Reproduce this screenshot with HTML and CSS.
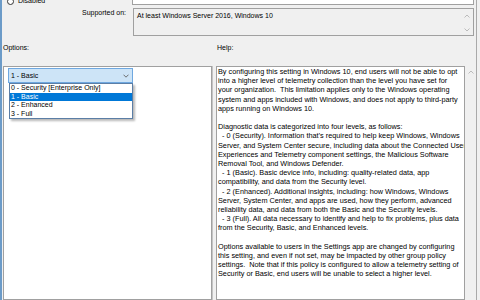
FILE: index.html
```html
<!DOCTYPE html>
<html>
<head>
<meta charset="utf-8">
<link rel="stylesheet" href="styles.css">
</head>
<body>
<div class="window">
  <div class="top">
    <div class="radio"><span class="radio-dot"></span><span class="radio-label">Disabled</span></div>
    <div class="comment-box"></div>
  </div>
  <div class="supported">
    <div class="sup-label">Supported on:</div>
    <div class="sup-box">
      <span class="sup-text">At least Windows Server 2016, Windows 10</span>
      <div class="sup-scroll">
        <svg class="arrow" width="6" height="4" viewBox="0 0 6 4"><path d="M0.5 3.5 L3 1 L5.5 3.5" fill="none" stroke="#b4b4b4" stroke-width="0.9"/></svg>
        <svg class="arrow" width="6" height="4" viewBox="0 0 6 4"><path d="M0.5 0.5 L3 3 L5.5 0.5" fill="none" stroke="#b4b4b4" stroke-width="0.9"/></svg>
      </div>
    </div>
  </div>
  <div class="labels">
    <div class="opt-label">Options:</div>
    <div class="help-label">Help:</div>
  </div>
  <div class="panes">
    <div class="options-pane">
      <div class="combo-wrap">
        <div class="combo">
          <span>1 - Basic</span>
          <svg class="chev" width="6" height="4" viewBox="0 0 6 4"><path d="M0.5 0.7 L3 3.2 L5.5 0.7" fill="none" stroke="#606060" stroke-width="0.9"/></svg>
        </div>
        <ul class="list">
          <li>0 - Security [Enterprise Only]</li>
          <li class="sel">1 - Basic</li>
          <li>2 - Enhanced</li>
          <li>3 - Full</li>
        </ul>
      </div>
    </div>
    <div class="help-pane">
      <div class="help-text">By configuring this setting in Windows 10, end users will not be able to opt
into a higher level of telemetry collection than the level you have set for
your organization.  This limitation applies only to the Windows operating
system and apps included with Windows, and does not apply to third-party
apps running on Windows 10.

Diagnostic data is categorized into four levels, as follows:
  - 0 (Security). Information that’s required to help keep Windows, Windows
Server, and System Center secure, including data about the Connected User
Experiences and Telemetry component settings, the Malicious Software
Removal Tool, and Windows Defender.
  - 1 (Basic). Basic device info, including: quality-related data, app
compatibility, and data from the Security level.
  - 2 (Enhanced). Additional insights, including: how Windows, Windows
Server, System Center, and apps are used, how they perform, advanced
reliability data, and data from both the Basic and the Security levels.
  - 3 (Full). All data necessary to identify and help to fix problems, plus data
from the Security, Basic, and Enhanced levels.

Options available to users in the Settings app are changed by configuring
this setting, and even if not set, may be impacted by other group policy
settings.  Note that if this policy is configured to allow a telemetry setting of
Security or Basic, end users will be unable to select a higher level.</div>
      <div class="help-scroll">
        <svg class="arrow" width="6" height="4" viewBox="0 0 6 4"><path d="M0.5 3.5 L3 1 L5.5 3.5" fill="none" stroke="#b4b4b4" stroke-width="0.9"/></svg>
      </div>
    </div>
  </div>
</div>
</body>
</html>
```
FILE: styles.css
```css
* { box-sizing: border-box; margin: 0; padding: 0; }
html, body { width: 480px; height: 300px; overflow: hidden; background: #f0f0f0; }
body {
  font-family: "Liberation Sans", Arial, sans-serif;
  font-size: 7px;
  color: #000;
}
.window {
  width: 477px;
  height: 300px;
  border-left: 2px solid #6c9bc8;
  border-right: 1px solid #a9a9a9;
  display: flex;
  flex-direction: column;
  overflow: hidden;
}
.top {
  display: flex;
  height: 5px;
  align-items: flex-start;
}
.radio {
  display: flex;
  align-items: center;
  margin-top: -3px;
  margin-left: 5px;
  height: 8px;
}
.radio-dot {
  width: 7px;
  height: 7px;
  border: 1px solid #333;
  border-radius: 50%;
  background: #fff;
  margin-right: 4px;
}
.radio-label { line-height: 8px; }
.comment-box {
  margin-left: auto;
  margin-right: 2px;
  width: 342px;
  height: 30px;
  margin-top: -25px;
  background: #fff;
  border: 1px solid #a0a0a0;
}
.supported {
  display: flex;
  margin-top: 3px;
}
.sup-label {
  width: 124px;
  text-align: right;
  padding-top: 1px;
  line-height: 8px;
}
.sup-box {
  margin-left: 7px;
  width: 341px;
  height: 28px;
  border: 1px solid #a0a0a0;
  display: flex;
  justify-content: space-between;
  padding-left: 3px;
  padding-top: 3px;
}
.sup-text { line-height: 8px; }
.sup-scroll {
  width: 12px;
  display: flex;
  flex-direction: column;
  align-items: center;
  gap: 10px;
  padding-top: 2px;
}
.arrow { display: block; }
.labels {
  display: flex;
  margin-top: 8px;
  line-height: 8px;
}
.opt-label { width: 214px; padding-left: 1px; }
.help-label { padding-left: 1px; }
.panes {
  display: flex;
  margin-top: 14px;
  flex: 1;
}
.options-pane {
  margin-left: 1px;
  width: 209px;
  background: #fff;
  border: 1px solid #a0a0a0;
  box-shadow: 1px 0 0 #c4c4c4;
}
.combo-wrap {
  position: relative;
  margin-left: 4px;
  margin-top: 1px;
  width: 125px;
}
.combo {
  height: 15px;
  background: #cde4f7;
  border: 1px solid #6fa8e0;
  display: flex;
  align-items: center;
  justify-content: space-between;
  padding-left: 2px;
  padding-right: 3px;
}
.list {
  position: absolute;
  top: 15px;
  left: 1px;
  width: 124px;
  list-style: none;
  background: #fff;
  border: 1px solid #5b7ea6;
  box-shadow: 2px 2px 2px rgba(0, 0, 0, 0.28);
}
.list li {
  height: 8.6px;
  line-height: 8.6px;
  padding-left: 1px;
}
.list li.sel { background: #0078d7; color: #fff; }
.help-pane {
  margin-left: 4px;
  width: 260px;
  display: flex;
}
.help-text {
  width: 249px;
  background: #fff;
  border: 1px solid #a0a0a0;
  white-space: pre;
  overflow: hidden;
  font-size: 7.3px;
  line-height: 9.2px;
  padding-left: 1px;
  padding-top: 0;
}
.help-scroll {
  flex: 1;
  display: flex;
  justify-content: center;
  padding-top: 4px;
}
```
